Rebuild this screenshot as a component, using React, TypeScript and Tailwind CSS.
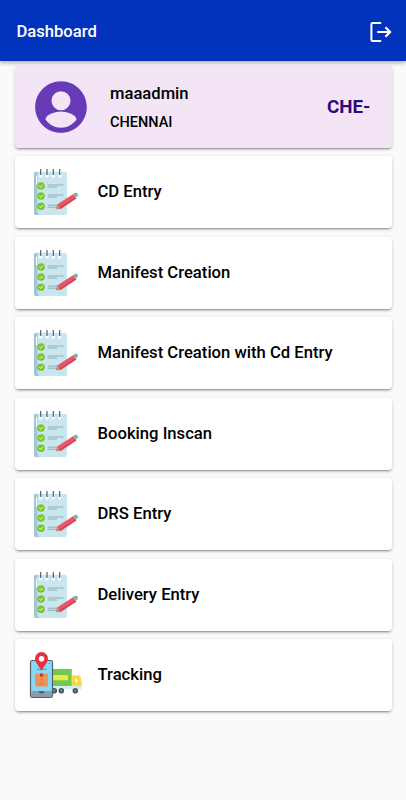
const menuItems = [
  { title: 'CD Entry', icon: ChecklistIcon },
  { title: 'Manifest Creation', icon: ChecklistIcon },
  { title: 'Manifest Creation with Cd Entry', icon: ChecklistIcon },
  { title: 'Booking Inscan', icon: ChecklistIcon },
  { title: 'DRS Entry', icon: ChecklistIcon },
  { title: 'Delivery Entry', icon: ChecklistIcon },
  { title: 'Tracking', icon: TrackingIcon },
]

function ChecklistIcon() {
  return (
    <svg viewBox="0 0 56 56" className="h-14 w-14 shrink-0">
      <rect x="6" y="7.8" width="33" height="43.2" rx="2" fill="#c9e6ee" />
      <path d="M8 7.8h1.4V47q0 3 2.3 4H8q-2 0-2-2V9.8q0-2 2-2z" fill="#9fc6d3" />
      <path d="M8.5 12v8" stroke="#fff" strokeWidth="1" strokeLinecap="round" />
      {[12.7, 19, 25.3, 31.7].map((x) => (
        <g key={x}>
          <circle cx={x} cy="12" r="1.8" fill="#fff" />
          <path d={`M${x} 5v6`} stroke="#46535d" strokeWidth="1.1" />
        </g>
      ))}
      {[22, 32, 42.2].map((y) => (
        <g key={y}>
          <circle cx="13" cy={y} r="3.8" fill="#7bc62d" />
          <path d={`M11.4 ${y}l1.2 1.2 2.2-2.2`} stroke="#fff" strokeWidth="1" fill="none" />
          <path d={`M19.7 ${y - 1}h16M19.7 ${y + 1}h9.3`} stroke="#91adb8" strokeWidth="1" />
        </g>
      ))}
      <path d="M27.4 45.2l2-4.8 3.2 4.5z" fill="#c98b76" />
      <path d="M29.2 40.4L45.3 29.9l3 4.7L32.4 45z" fill="#e95765" />
      <path d="M31.4 43.4l16-10.2.9 1.4L32.4 45z" fill="#cf4658" />
      <path d="M45.2 30l2-1.2q2-.6 2.6 1.1.4 1.8-.8 2.9l-1.1.8z" fill="#70b5a9" />
    </svg>
  )
}

function TrackingIcon() {
  return (
    <svg viewBox="0 0 56 56" className="h-14 w-14 shrink-0">
      {/* Truck */}
      <path d="M24 38.5h30v2.2q0 1.6-1.6 1.6H24z" fill="#d4eef6" />
      <path d="M24 22h19.8v17H24z" fill="#71c94e" />
      <path d="M24 28h16v5.3H24z" fill="#e8ea48" />
      <path d="M43.8 28.3h6.7q1.6 0 2 1.5l1.5 6v3.2H43.8z" fill="#fbdc44" />
      <path d="M46.5 31h3.3l1.2 5h-4.5z" fill="#fff6c5" stroke="#edc51f" strokeWidth=".8" />
      {[26.3, 33.3, 47.3].map((x) => (
        <g key={x}>
          <circle cx={x} cy="43.7" r="2.8" fill="#475b69" />
          <circle cx={x} cy="43.7" r=".9" fill="#8299a5" />
        </g>
      ))}
      {/* Phone */}
      <rect x="2.5" y="13.5" width="22" height="37" rx="1.8" fill="#89d9f4" stroke="#50616e" strokeWidth="1.2" />
      <path d="M3.1 44h20.8v5q0 .9-.9.9H4q-.9 0-.9-.9z" fill="#8b9da9" />
      <path d="M10.5 44.3h6q-.5 2.3-3 2.3t-3-2.3z" fill="#465966" />
      <path d="M8.7 22.2h10" stroke="#2f9fd2" strokeWidth="1" />
      <circle cx="21.4" cy="16.5" r=".6" fill="#3e6d88" />
      <path d="M7 26.5h13v13H7z" fill="#ed9558" />
      <path d="M12 26.5h3v3.2h-3z" fill="#d52f3f" />
      <path d="M13.5 36.8v-5m-1.7 1.5l1.7-1.7 1.7 1.7M10 37.5h7" fill="none" stroke="#d08048" strokeWidth=".8" />
      {/* Map pin */}
      <path d="M13.5 24.2C12.5 20 7 16.4 7 11.5a6.5 6.5 0 0 1 13 0c0 4.9-5.5 8.5-6.5 12.7z" fill="#e8303e" />
      <circle cx="13.5" cy="11.7" r="2.8" fill="#fff" />
    </svg>
  )
}

function LogoutIcon() {
  return (
    <svg viewBox="0 0 24 24" className="h-6 w-6" fill="none" stroke="#fff" strokeWidth="2">
      <path d="M13.2 3.1H4.6q-1.2 0-1.2 1.2v15.4q0 1.2 1.2 1.2h8.6" />
      <path d="M9.2 12h12.6M17.4 7.3l4.7 4.7-4.7 4.7" strokeWidth="2.2" />
    </svg>
  )
}

export default function App() {
  return (
    <div className="flex h-[800px] w-[406px] flex-col overflow-hidden bg-[#fafafa] font-['Roboto',sans-serif] font-medium text-black">
      <header className="z-10 flex h-[61px] shrink-0 items-center justify-between bg-[#0233bd] pr-[14px] pl-[16.5px] pt-[3px] shadow-[0_2px_4px_rgba(0,0,0,0.3)]">
        <h1 className="text-[16.6px] leading-5 text-white">Dashboard</h1>
        <LogoutIcon />
      </header>

      <main className="flex flex-col gap-[8.5px] px-[14.5px] pt-[5px]">
        <section className="flex h-[81.5px] items-center rounded bg-[#f3e5f5] pr-[21px] pl-[15px] shadow-[0_3px_1px_-2px_rgba(0,0,0,0.2),0_2px_2px_rgba(0,0,0,0.14),0_1px_4px_rgba(0,0,0,0.12)]">
          <svg viewBox="0 0 24 24" className="h-[62px] w-[62px] shrink-0" fill="#673ab7">
            <path d="M12 2C6.48 2 2 6.48 2 12s4.48 10 10 10 10-4.48 10-10S17.52 2 12 2zm0 3.9a3.7 3.7 0 1 1 0 7.4 3.7 3.7 0 0 1 0-7.4zm0 14.1c-2.5 0-4.7-1.3-6-3.2 0-2 4-3.1 6-3.1s6 1.1 6 3.1c-1.3 1.9-3.5 3.2-6 3.2z" />
          </svg>
          <div className="ml-[18.5px] flex flex-1 flex-col gap-[9px] pt-[3.5px]">
            <span className="text-[16.6px] leading-5">maaadmin</span>
            <span className="text-[14.5px] leading-5">CHENNAI</span>
          </div>
          <span className="text-[18.8px] font-bold text-[#310b79]">CHE-</span>
        </section>

        {menuItems.map(({ title, icon: Icon }) => (
          <button
            key={title}
            className="flex h-[72px] items-center gap-[13.5px] rounded bg-white pl-[13.5px] text-left text-[16.65px] shadow-[0_3px_1px_-2px_rgba(0,0,0,0.2),0_2px_2px_rgba(0,0,0,0.14),0_1px_4px_rgba(0,0,0,0.12)]"
          >
            <Icon />
            <span className="pt-[0.9px] leading-5">{title}</span>
          </button>
        ))}
      </main>
    </div>
  )
}
